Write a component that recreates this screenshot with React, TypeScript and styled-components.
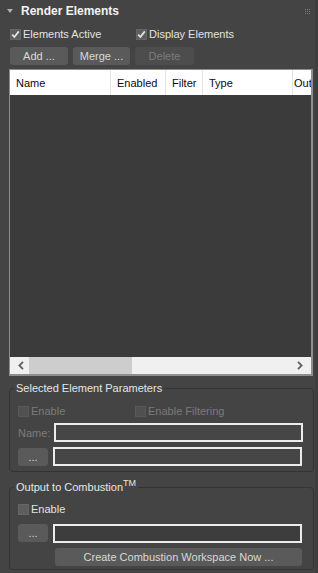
import React from "react";
import styled, { createGlobalStyle } from "styled-components";

const Global = createGlobalStyle`
  html, body { margin: 0; padding: 0; background: #3e3e3e; }
  body { font-family: "Liberation Sans", Arial, sans-serif; font-size: 11px; }
  * { box-sizing: border-box; }
`;

const Page = styled.div`
  width: 318px;
  height: 573px;
  display: flex;
  background: #3e3e3e;
  overflow: hidden;
`;

const Rollout = styled.div`
  width: 315px;
  height: 573px;
  background: #444444;
  display: flex;
  flex-direction: column;
  padding: 0 2px 0 9px;
`;

const Header = styled.div`
  height: 22px;
  display: flex;
  align-items: center;
  margin-left: -9px;
  padding-left: 7px;
  padding-right: 3px;
`;

const Title = styled.div`
  flex: 1;
  margin-left: 8px;
  color: #f2f2f2;
  font-weight: bold;
  font-size: 12px;
`;

const Row = styled.div<{ $h: number; $mt?: number; $pl?: number }>`
  height: ${(p) => p.$h}px;
  margin-top: ${(p) => p.$mt ?? 0}px;
  padding-left: ${(p) => p.$pl ?? 0}px;
  display: flex;
  align-items: center;
  gap: 5px;
`;

const CheckLabel = styled.label<{ $w?: number; $disabled?: boolean }>`
  display: flex;
  align-items: center;
  gap: 2px;
  width: ${(p) => (p.$w ? `${p.$w}px` : "auto")};
  flex-shrink: 0;
  color: ${(p) => (p.$disabled ? "#7a7a7a" : "#e2e2e2")};
  font-size: 11px;
  white-space: nowrap;
`;

const Btn = styled.div<{ $w: number; $h?: number; $disabled?: boolean }>`
  width: ${(p) => p.$w}px;
  height: ${(p) => p.$h ?? 18}px;
  border-radius: 3px;
  background: ${(p) => (p.$disabled ? "#4d4d4d" : "#5a5a5a")};
  color: ${(p) => (p.$disabled ? "#7c7c7c" : "#d8d8d8")};
  display: flex;
  align-items: center;
  justify-content: center;
  font-size: 11px;
  flex-shrink: 0;
  white-space: nowrap;
`;

const List = styled.div`
  margin-top: 4px;
  width: 304px;
  height: 307px;
  border: 1px solid #8e8e8e;
  border-right-width: 2px;
  border-bottom-width: 2px;
  display: flex;
  flex-direction: column;
  background: #3b3b3b;
`;

const ListHead = styled.div`
  height: 25px;
  background: #ffffff;
  display: flex;
  overflow: hidden;
  flex-shrink: 0;
`;

const Col = styled.div<{ $w?: number }>`
  width: ${(p) => (p.$w ? `${p.$w}px` : "auto")};
  flex: ${(p) => (p.$w ? "0 0 auto" : "1 1 0")};
  min-width: 0;
  border-right: ${(p) => (p.$w ? "1px solid #e3e3e3" : "none")};
  color: #0a0a14;
  font-size: 11px;
  display: flex;
  align-items: center;
  padding-left: ${(p) => (p.$w ? 6 : 1)}px;
  white-space: nowrap;
  overflow: hidden;
`;

const ListBody = styled.div`
  flex: 1;
`;

const HScroll = styled.div`
  height: 17px;
  background: #f0f0f0;
  display: flex;
  align-items: center;
  padding: 0 4px;
`;

const Arrow = styled.div`
  width: 14px;
  display: flex;
  justify-content: center;
  align-items: center;
`;

const Track = styled.div`
  flex: 1;
  height: 17px;
  display: flex;
  padding: 0 1px;
`;

const Thumb = styled.div`
  width: 103px;
  height: 17px;
  background: #cdcdcd;
`;

const Group = styled.fieldset<{ $mt: number; $h: number }>`
  margin: ${(p) => p.$mt}px 0 0 0;
  width: 305px;
  height: ${(p) => p.$h}px;
  border: 1px solid #333333;
  border-radius: 4px;
  padding: 0 0 0 8px;
  min-width: 0;
`;

const Legend = styled.legend`
  padding: 0 2px;
  margin-left: -4px;
  color: #e6e6e6;
  font-size: 11px;
  line-height: 14px;
`;

const Sup = styled.sup`
  font-size: 9px;
  vertical-align: 5px;
  line-height: 0;
`;

const FieldLabel = styled.div`
  width: 31px;
  flex-shrink: 0;
  white-space: nowrap;
  color: #7c7c7c;
  font-size: 11px;
`;

const Field = styled.div<{ $dark?: boolean }>`
  width: 249px;
  height: 19px;
  flex-shrink: 0;
  border: 2px solid #ececec;
  background: ${(p) => (p.$dark ? "#3d3d3d" : "#464646")};
`;

const Box = ({ checked, disabled }: { checked?: boolean; disabled?: boolean }) => (
  <svg width="11" height="11" viewBox="0 0 11 11">
    <rect x="0.5" y="0.5" width="10" height="10" fill={disabled ? "#505050" : "#5e5e5e"} stroke={disabled ? "#585858" : "#666"} />
    {checked && <path d="M2.2 5.6 L4.4 8 L8.8 2.4" fill="none" stroke="#e6e6e6" strokeWidth="1.7" />}
  </svg>
);

export default function App() {
  return (
    <Page>
      <Global />
      <Rollout>
        <Header>
          <svg width="6" height="5" viewBox="0 0 6 5">
            <path d="M0 0 H6 L3 4 Z" fill="#b0b0b0" />
          </svg>
          <Title>Render Elements</Title>
          <svg width="5" height="5" viewBox="0 0 5 5">
            {[0, 2, 4].map((x) =>
              [0, 2, 4].map((y) => <rect key={`${x}-${y}`} x={x} y={y} width="1" height="1" fill="#7a7a7a" />)
            )}
          </svg>
        </Header>
        <Row $h={22} $mt={1} $pl={1}>
          <CheckLabel $w={121}>
            <Box checked />
            Elements Active
          </CheckLabel>
          <CheckLabel>
            <Box checked />
            Display Elements
          </CheckLabel>
        </Row>
        <Row $h={18} $mt={2} $pl={1}>
          <Btn $w={58}>Add ...</Btn>
          <Btn $w={57}>Merge ...</Btn>
          <Btn $w={59} $disabled>
            Delete
          </Btn>
        </Row>
        <List>
          <ListHead>
            <Col $w={101}>Name</Col>
            <Col $w={55}>Enabled</Col>
            <Col $w={37}>Filter</Col>
            <Col $w={90}>Type</Col>
            <Col>Output Path</Col>
          </ListHead>
          <ListBody />
          <HScroll>
            <Arrow>
              <svg width="6" height="9" viewBox="0 0 6 9">
                <path d="M5 0.8 L1.4 4.5 L5 8.2" fill="none" stroke="#606060" strokeWidth="1.8" />
              </svg>
            </Arrow>
            <Track>
              <Thumb />
            </Track>
            <Arrow>
              <svg width="6" height="9" viewBox="0 0 6 9">
                <path d="M1 0.8 L4.6 4.5 L1 8.2" fill="none" stroke="#606060" strokeWidth="1.8" />
              </svg>
            </Arrow>
          </HScroll>
        </List>
        <Group $mt={5} $h={91}>
          <Legend>Selected Element Parameters</Legend>
          <Row $h={22} $mt={5}>
            <CheckLabel $w={112} $disabled>
              <Box disabled />
              Enable
            </CheckLabel>
            <CheckLabel $disabled>
              <Box disabled />
              Enable Filtering
            </CheckLabel>
          </Row>
          <Row $h={19} $mt={1}>
            <FieldLabel>Name:</FieldLabel>
            <Field />
          </Row>
          <Row $h={19} $mt={5}>
            <Btn $w={30}>...</Btn>
            <Field />
          </Row>
        </Group>
        <Group $mt={8} $h={90}>
          <Legend>
            Output to Combustion<Sup>TM</Sup>
          </Legend>
          <Row $h={20} $mt={5}>
            <CheckLabel>
              <Box />
              Enable
            </CheckLabel>
          </Row>
          <Row $h={18} $mt={5}>
            <Btn $w={30}>...</Btn>
            <Field $dark />
          </Row>
          <Row $h={18} $mt={6} $pl={37}>
            <Btn $w={247}>Create Combustion Workspace Now ...</Btn>
          </Row>
        </Group>
      </Rollout>
    </Page>
  );
}
